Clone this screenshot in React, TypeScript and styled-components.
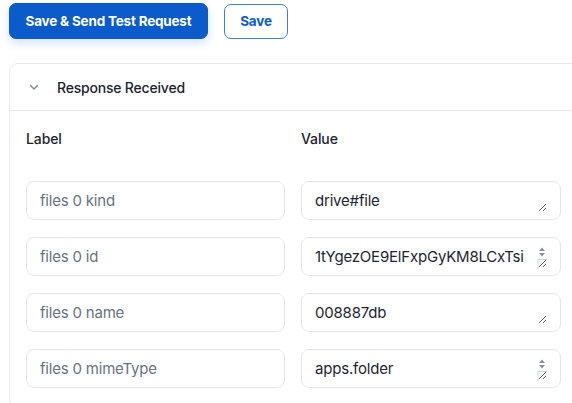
import React from 'react';
import styled, { createGlobalStyle } from 'styled-components';

const GlobalStyle = createGlobalStyle`
  html, body {
    margin: 0;
    padding: 0;
    background: #ffffff;
    overflow: hidden;
  }
  body {
    font-family: Inter, 'Noto Sans', 'Liberation Sans', sans-serif;
    color: #1f2533;
  }
`;

const Page = styled.div`
  width: 572px;
  height: 403px;
  padding: 3px 0 0 9px;
  box-sizing: border-box;
  overflow: hidden;
`;

const Toolbar = styled.div`
  display: flex;
  align-items: center;
  gap: 16px;
`;

const Button = styled.button<{ $variant: 'primary' | 'outline' }>`
  font-family: inherit;
  font-size: 13.5px;
  font-weight: 700;
  letter-spacing: -0.2px;
  white-space: nowrap;
  height: ${(p) => (p.$variant === 'primary' ? '36px' : '35px')};
  border-radius: 7px;
  cursor: pointer;
  padding: 0;
  width: ${(p) => (p.$variant === 'primary' ? '199px' : '64px')};
  background: ${(p) => (p.$variant === 'primary' ? '#0b5bcb' : '#ffffff')};
  color: ${(p) => (p.$variant === 'primary' ? '#ffffff' : '#0b5bcb')};
  border: 1px solid ${(p) => (p.$variant === 'primary' ? '#0b5bcb' : '#3d7ee0')};
  box-shadow: ${(p) => (p.$variant === 'primary' ? '0 4px 10px rgba(11, 91, 203, 0.18)' : 'none')};
`;

const Card = styled.section`
  margin-top: 24px;
  width: 640px;
  border: 1px solid #e6e8ec;
  border-radius: 9px;
  background: #ffffff;
`;

const CardHeader = styled.div`
  display: flex;
  align-items: center;
  gap: 17px;
  height: 46px;
  padding-left: 18px;
  border-bottom: 1px solid #e6e8ec;
  font-size: 14px;
  font-weight: 500;
  letter-spacing: -0.2px;
  color: #1c2230;
`;

const Chevron = styled.svg`
  width: 12px;
  height: 12px;
  color: #7b8494;
`;

const CardBody = styled.div`
  padding: 19px 17px 20px 16px;
`;

const FieldGrid = styled.div`
  display: grid;
  grid-template-columns: 259px 260px;
  column-gap: 16px;
  row-gap: 17px;
`;

const ColumnTitle = styled.div`
  font-size: 14px;
  font-weight: 500;
  letter-spacing: -0.1px;
  color: #1c2230;
  height: 17px;
  line-height: 17px;
  margin-bottom: 17px;
`;

const KeyInput = styled.input`
  box-sizing: border-box;
  height: 39px;
  width: 100%;
  padding: 0 13px;
  border: 1px solid #e3e6ea;
  border-radius: 8px;
  font-family: inherit;
  font-size: 15px;
  letter-spacing: -0.2px;
  color: #1f2533;
  outline: none;
  &::placeholder {
    color: #6a7280;
  }
`;

const ValueBox = styled.div`
  position: relative;
  box-sizing: border-box;
  height: 39px;
  padding: 9px 13px 0;
  border: 1px solid #e3e6ea;
  border-radius: 8px;
  background: #ffffff;
`;

const ValueArea = styled.textarea<{ $scroll?: boolean }>`
  display: block;
  box-sizing: border-box;
  width: 100%;
  height: 21px;
  margin: 0;
  padding: 0 ${(p) => (p.$scroll ? '14px' : '0')} 0 0;
  border: none;
  font-family: inherit;
  font-size: 15px;
  letter-spacing: -0.2px;
  line-height: 20px;
  color: #1f2533;
  background: transparent;
  outline: none;
  resize: vertical;
  overflow: hidden;
  white-space: nowrap;
`;

const Spinner = styled.svg`
  position: absolute;
  right: 13px;
  top: 8px;
  width: 10px;
  height: 24px;
  pointer-events: none;
`;

const rows = [
  { key: 'files 0 kind', value: 'drive#file', scroll: false },
  { key: 'files 0 id', value: '1tYgezOE9ElFxpGyKM8LCxTsi', scroll: true },
  { key: 'files 0 name', value: '008887db', scroll: false },
  { key: 'files 0 mimeType', value: 'apps.folder', scroll: true },
];

export default function App() {
  return (
    <>
      <GlobalStyle />
      <Page>
        <Toolbar>
          <Button $variant='primary'>Save &amp; Send Test Request</Button>
          <Button $variant='outline'>Save</Button>
        </Toolbar>
        <Card>
          <CardHeader>
            <Chevron viewBox='0 0 12 12' fill='none'>
              <path d='M2.5 4.5 L6 8 L9.5 4.5' stroke='currentColor' strokeWidth='1.4' strokeLinecap='round' strokeLinejoin='round' />
            </Chevron>
            Response Received
          </CardHeader>
          <CardBody>
            <FieldGrid>
              <ColumnTitle>Label</ColumnTitle>
              <ColumnTitle>Value</ColumnTitle>
              {rows.map((row) => (
                <React.Fragment key={row.key}>
                  <KeyInput placeholder={row.key} readOnly />
                  <ValueBox>
                    <ValueArea $scroll={row.scroll} defaultValue={row.value} rows={1} />
                    {row.scroll && (
                      <Spinner viewBox='0 0 10 24'>
                        <path d='M5 1.5 L8 5 L2 5 Z' fill='#8a8f98' />
                        <path d='M5 10.5 L8 7 L2 7 Z' fill='#8a8f98' />
                        <path d='M1 13.5 V23.5 M1 13.5 H10' stroke='#d4d7dc' strokeWidth='1' fill='none' />
                      </Spinner>
                    )}
                  </ValueBox>
                </React.Fragment>
              ))}
            </FieldGrid>
          </CardBody>
        </Card>
      </Page>
    </>
  );
}
